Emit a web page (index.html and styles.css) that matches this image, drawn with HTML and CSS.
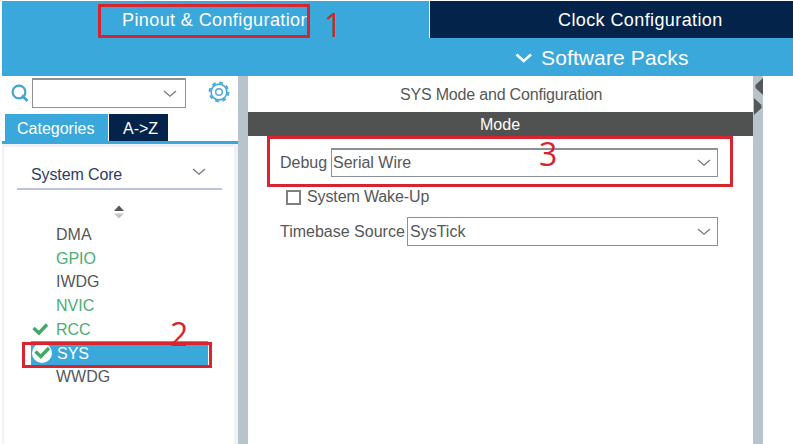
FILE: index.html
```html
<!DOCTYPE html>
<html lang="en">
<head>
<meta charset="utf-8">
<title>Pinout &amp; Configuration</title>
<link rel="stylesheet" href="styles.css">
</head>
<body>
<div class="app">
  <header class="header">
    <nav class="tabs">
      <div class="tab tab-pinout"><span>Pinout &amp; Configuration</span></div>
      <div class="tab tab-clock"><span>Clock Configuration</span></div>
    </nav>
    <div class="packs">
      <svg class="packs-arrow" width="18" height="12" viewBox="0 0 18 12"><path d="M1.5 2.5L8.7 9L16 2.5" fill="none" stroke="#fff" stroke-width="2.6"/></svg>
      <span>Software Packs</span>
    </div>
  </header>
  <main class="main">
    <aside class="side">
      <div class="search-row">
        <svg class="search-icon" width="18" height="19" viewBox="0 0 18 19"><circle cx="8" cy="8" r="6.4" fill="none" stroke="#3fa5d6" stroke-width="2.2"/><path d="M11 11.5L16.5 17" stroke="#3fa5d6" stroke-width="2.6"/></svg>
        <div class="combo search-box"><svg class="chev" width="14" height="8" viewBox="0 0 14 8"><path d="M1 1L7 6.2L13 1" /></svg></div>
        <svg class="gear" width="22" height="22" viewBox="0 0 22 22" fill="none" stroke="#48a9d8"><circle cx="11" cy="11" r="9.4" stroke-width="2" stroke-dasharray="3.7 3.68"/><circle cx="11" cy="11" r="7.9" stroke-width="1.6"/><circle cx="11" cy="11" r="3.3" stroke-width="1.4"/></svg>
      </div>
      <div class="side-tabs">
        <div class="side-tab active"><span>Categories</span></div>
        <div class="side-tab dark"><span>A-&gt;Z</span></div>
      </div>
      <div class="tree">
        <div class="group"><span>System Core</span><svg class="chev" width="14" height="8" viewBox="0 0 14 8"><path d="M1 1L7 6.2L13 1" /></svg></div>
        <svg class="sort" width="12" height="14" viewBox="0 0 12 14"><path d="M1 6L6 .5L11 6Z" fill="#555"/><path d="M1 8.5L6 13.5L11 8.5Z" fill="#c4c4c4"/></svg>
        <ul class="list">
          <li><span>DMA</span></li>
          <li class="green"><span>GPIO</span></li>
          <li><span>IWDG</span></li>
          <li class="green"><span>NVIC</span></li>
          <li class="green"><svg class="check" width="20" height="20" viewBox="0 0 20 20"><path d="M2.5 8L8 13L16 4.5" /></svg><span>RCC</span></li>
          <li class="selected"><svg class="check" width="20" height="20" viewBox="0 0 20 20"><circle cx="10" cy="10" r="10" fill="#fff"/><path d="M3.5 8.5L8.8 13.5L17 5" /></svg><span>SYS</span></li>
          <li><span>WWDG</span></li>
        </ul>
      </div>
    </aside>
    <div class="divider"></div>
    <section class="panel">
      <h1 class="title"><span>SYS Mode and Configuration</span></h1>
      <h2 class="mode"><span>Mode</span></h2>
      <div class="field debug"><label>Debug</label><div class="combo"><span>Serial Wire</span><svg class="chev" width="14" height="8" viewBox="0 0 14 8"><path d="M1 1L7 6.2L13 1" /></svg></div></div>
      <div class="wake"><i class="box"></i><span>System Wake-Up</span></div>
      <div class="field timebase"><label>Timebase Source</label><div class="combo"><span>SysTick</span><svg class="chev" width="14" height="8" viewBox="0 0 14 8"><path d="M1 1L7 6.2L13 1" /></svg></div></div>
    </section>
    <div class="divider"><svg width="10" height="40" viewBox="0 0 10 40" fill="#555759"><path d="M10 2V19L2.5 12V9Z"/><path d="M1 22V39L8.5 32V29Z"/></svg></div>
  </main>
  <div class="mark mark-one"></div><b class="num num-one">1</b>
  <div class="mark mark-two"></div><b class="num num-two">2</b>
  <div class="mark mark-three"></div><b class="num num-three">3</b>
</div>
</body>
</html>
```
FILE: styles.css
```css
* { box-sizing: border-box; }
body {
  margin: 0;
  background: #fff;
  font: 16px/20px "Liberation Sans", Arial, sans-serif;
  color: #55585a;
}
svg { display: block; flex: none; }
span, label { white-space: nowrap; }
.app { position: relative; width: 793px; height: 444px; padding: 1px 0 0 2px; overflow: hidden; }
.header { height: 75px; background: #3aa8db; color: #fff; }
.tabs { display: flex; height: 37px; font-size: 18px; line-height: 38px; letter-spacing: .4px; }
.tab-pinout { width: 428px; padding-left: 120px; border-right: 1px solid #fff; }
.tab-clock { flex: 1; padding-left: 128px; background: #03234b; }
.packs { display: flex; align-items: center; height: 38px; padding: 2px 0 0 513px; gap: 8px; font-size: 21px; letter-spacing: .12px; }
.main { display: flex; height: 368px; }
.side { display: flex; flex-direction: column; width: 236px; }
.search-row { display: flex; height: 38px; padding: 2px 0 0 9px; }
.search-icon { margin-top: 6px; }
.combo { display: flex; align-items: center; justify-content: space-between; border: 1px solid #8d9194; background: #fff; }
.chev path { fill: none; stroke: #77797b; stroke-width: 1.3; }
.search-box { width: 154px; height: 30px; margin-left: 3px; padding-right: 8px; justify-content: flex-end; border-top-width: 2px; }
.gear { margin: 3px 0 0 22px; }
.side-tabs { display: flex; gap: 1px; height: 30px; padding-left: 3px; border-bottom: 3px solid #3aa8db; color: #fff; line-height: 29px; }
.side-tab { height: 27px; }
.active { width: 103px; padding-left: 12px; background: #3aa8db; }
.dark { width: 59px; padding-left: 14px; background: #03234b; }
.tree { flex: 1; border: solid #eff1f4; border-width: 3px 4px 0 2px; padding: 13px 12px 0 13px; }
.group { display: flex; justify-content: space-between; height: 30px; padding: 5px 16px 0 14px; border-bottom: 2px solid #bcc3e0; color: #303c67; letter-spacing: -.12px; }
.group .chev { margin-top: 3px; }
.sort { margin: 15px 0 0 96px; }
.list { list-style: none; margin: 4px 0 0 14px; padding: 0; width: 177px; }
.list li { display: flex; align-items: center; height: 23.7px; padding-left: 25px; }
.list .check { margin: 0 5px 0 -25px; }
.list .selected .check { margin-left: -24px; }
.list .selected .check + span { padding-top: 1px; }
.check path { fill: none; stroke: #42a867; stroke-width: 3.4; }
.green { color: #4bad73; }
.list .selected { background: #3aa8db; color: #fff; }
.divider { width: 10px; background: #b8c4cc; }
.panel { width: 505px; }
.title { height: 36px; margin: 0; padding-left: 152px; font-size: 16px; font-weight: 400; line-height: 37px; letter-spacing: -.19px; }
.mode { height: 24px; margin: 0; padding-left: 232px; font-size: 16px; font-weight: 400; line-height: 25px; color: #fff; background: #4f5250; }
.field { display: flex; width: 470px; height: 29px; padding-left: 32px; line-height: 30px; }
.field .combo { flex: 1; padding: 0 6px 0 2px; }
.field label { flex: none; }
.debug { margin-top: 12px; }
.debug label { width: 51px; }
.debug .combo { border-top-width: 2px; padding-left: 1px; }
.wake { display: flex; align-items: center; gap: 6px; height: 20px; margin: 10px 0 10px 38px; letter-spacing: -.12px; }
.box { width: 15px; height: 15px; border: 2px solid #7e8082; }
.timebase label { width: 127px; }
.mark { position: absolute; border: 3px solid #d6252f; }
.mark-one { left: 98px; top: 4px; width: 212px; height: 34px; }
.mark-two { left: 22px; top: 342px; width: 190px; height: 26px; }
.mark-three { left: 267px; top: 136px; width: 466px; height: 51px; }
.num { position: absolute; color: #d6252f; font: 400 32px/32px "Open Sans", "Noto Sans", sans-serif; }
.num-one { left: 324px; top: 9px; }
.num-two { left: 170px; top: 318px; }
.num-three { left: 539px; top: 138px; }
```
